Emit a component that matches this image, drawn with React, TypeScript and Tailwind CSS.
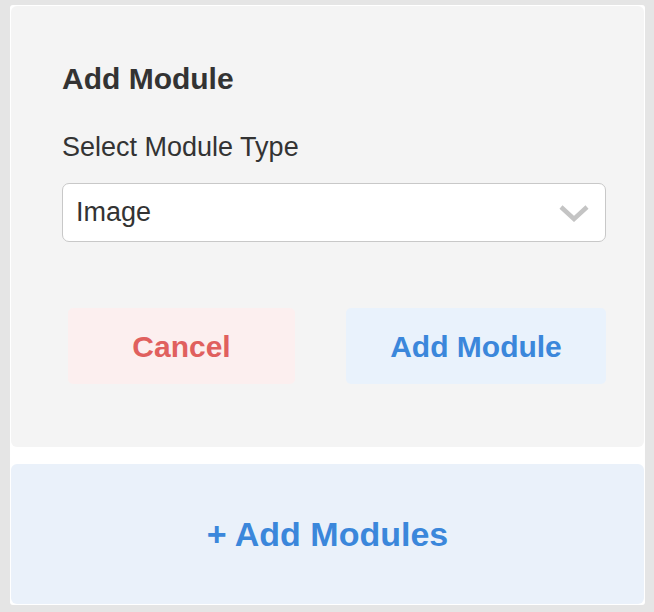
import React from "react";

export default function App() {
  return (
    <div
      className="w-[654px] h-[612px] bg-[#e5e5e5] pt-[5px] pl-[10px] pr-[9px] pb-[7px]"
      style={{ fontFamily: '"Liberation Sans", Arial, sans-serif' }}
    >
      <div className="bg-white flex flex-col gap-[17px] h-full p-[1px] rounded-[3px]">
        <div className="bg-[#f4f4f4] rounded-[6px] h-[441px] shrink-0 pl-[51px] pr-[38px] pt-[58px] flex flex-col">
          <h2 className="text-[30px] leading-[30px] font-bold text-[#333333]">Add Module</h2>
          <label className="mt-[40px] text-[27px] leading-[27px] text-[#333333]">Select Module Type</label>
          <div className="mt-[22px] h-[59px] bg-white border-[1.5px] border-[#c8c8c8] rounded-[7px] flex items-center justify-between pl-[13px] pr-[15px]">
            <span className="text-[27px] text-[#333333]">Image</span>
            <svg width="32" height="18" viewBox="0 0 32 18" fill="none">
              <path d="M3 3 L16 15 L29 3" stroke="#c4c4c4" strokeWidth="4.5" strokeLinecap="butt" strokeLinejoin="miter" />
            </svg>
          </div>
          <div className="mt-[66px] flex gap-[51px] pl-[6px]">
            <button className="w-[227px] h-[76px] rounded-[5px] bg-[#fcefef] text-[#e0605e] text-[30px] font-bold">
              Cancel
            </button>
            <button className="w-[260px] h-[76px] rounded-[5px] bg-[#e9f2fc] text-[#3b87db] text-[30px] font-bold">
              Add Module
            </button>
          </div>
        </div>
        <div className="bg-[#eaf1fa] rounded-[6px] flex-1 flex items-center justify-center">
          <span className="text-[34px] font-bold text-[#3b87db]">+ Add Modules</span>
        </div>
      </div>
    </div>
  );
}
